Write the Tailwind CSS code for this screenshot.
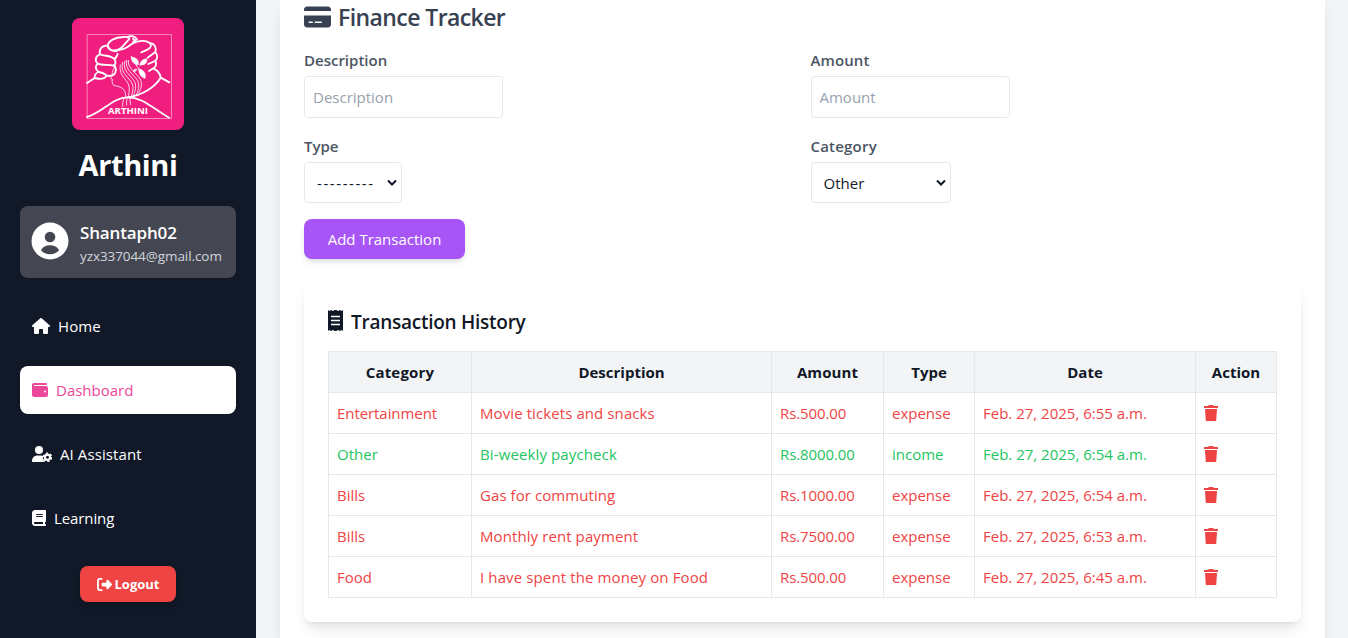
<!DOCTYPE html>
<html lang="en">
<head>
<meta charset="utf-8">
<title>Arthini</title>
<script src="https://cdn.jsdelivr.net/npm/@tailwindcss/browser@4"></script>
</head>
<body class="flex h-[638px] overflow-hidden bg-[#f3f4f6] font-['Open_Sans','Noto_Sans',sans-serif] text-[15px] leading-6 text-[#111827]">
<aside class="flex h-full w-64 shrink-0 flex-col items-center bg-[#111827] px-5 pt-[18px] text-white">
  <svg class="size-28 shrink-0 rounded-lg" viewBox="24 24 336 336" fill="none" stroke="#fff" stroke-linecap="round" stroke-linejoin="round">
    <path fill="#f01f7f" stroke="none" d="M24 24h336v336H24z"/>
    <path stroke="#f986ba" stroke-width="3" d="M70.500 73.500h252v252h-252z"/>
    <g stroke-width="5.500">
      <path d="M69 219l23-15M92 204c-1-9 4-15 12-18M92 204c14 4 29 3 36-7M104 186c-11-8-11-18-3-25 14 6 32 2 47 6 12 5 9 24-2 29-7 3-12 1-17 1-9-8-16-10-24-11M101 161c-10-10-6-24 7-28 16 6 34 3 43 14 6 9 4 16-3 20M108 133c-4-13 4-27 23-27 3 12 12 18 27 18M151 147c6-4 8-8 10-15M131 108c2-16 21-26 47-27 15-1 20 2 17 7-11 10-18 24-31 30-15 7-31 2-33-10zM189 82c10-6 23-5 30 6l-12 8M207 86l9 11M164 120c18-1 27-8 38-17 18-12 42-14 55-4 8 7 3 14-5 19l-20 9M257 99c15 2 21 12 17 27l-23 17M274 126c8 10 7 22-1 27l-20 9M274 153c5 11 1 18-6 22l-13 8M268 175c13 7 21 17 22 28l26 14M290 203c-16 26-52 53-100 59"/>
      <path d="M69 321c48-14 78-59 121-59 45 0 71 29 125 61"/>
    </g>
    <path stroke-width="2.400" d="M155 167c-9 10-10 20-11 28-1 5-5 7-4 10l5 3-1 7c3 2 0 5 2 8 3 6 15 4 24 9 13 6 15 17 15 29M169 165c-5 24 10 36 22 53 8 14 4 29 2 42M176 157c-9 28 14 42 26 59 9 14 4 29 0 44M183 153c-11 28 18 43 29 62 6 13 2 28-4 43M188 151c-8 27 22 43 33 61 6 14 3 28-4 43M193 151c-4 24 27 39 37 59 5 14 2 26-6 38M181 264c-6 10-5 18-5 25M190 264c-3 9-3 14-2 21M197 264c2 8 1 13 3 20"/>
    <path fill="#fff" stroke-width="2" d="M202 141c15 2 23 9 21 23-13-1-21-9-21-23zM228 165c0-11 8-17 20-19 3 13-7 20-20 19zM225 177c14 2 22 14 18 28-11-3-20-14-18-28zM218 178c-9-2-12 4-7 8z"/>
    <path stroke-width="2.500" d="M202 141l26 42"/>
    <text x="132" y="311" fill="#fff" stroke="none" font-size="26" font-weight="700" textLength="120" lengthAdjust="spacingAndGlyphs">ARTHINI</text>
  </svg>
  <h1 class="mb-[23px] mt-[17px] text-[29px] font-bold leading-9 tracking-[-0.4px]">Arthini</h1>
  <div class="flex h-[72px] w-full shrink-0 items-center gap-3 rounded-lg bg-[#444751] px-[11px]">
    <svg class="-mr-px -mt-0.5 size-[38px] shrink-0" viewBox="0 0 38 38"><circle cx="19" cy="19" r="18.500" fill="#fff"/><circle cx="19" cy="15" r="5.300" fill="#444751"/><path fill="#444751" d="M10 28.300c1.500-3.200 5-5 9-5s7.500 1.800 9 5c-2 2.500-5.400 4-9 4s-7-1.500-9-4z"/></svg>
    <div><div class="pt-0.5 text-[17px] font-semibold leading-[26px] tracking-[-0.15px]">Shantaph02</div><div class="text-[13.500px] leading-5 tracking-[-0.08px] text-gray-300">yzx337044@gmail.com</div></div>
  </div>
  <nav class="mt-6 flex w-full flex-col gap-4">
    <a class="flex h-12 items-center gap-2 px-3"><svg class="h-4 w-[18px]" viewBox="0 0 576 512" fill="currentColor"><path d="M575.8 255.500c0 18-15 32.100-32 32.100h-32l.7 160.200c0 2.700-.2 5.400-.5 8.100V472c0 22.100-17.900 40-40 40H392c-22.100 0-40-17.900-40-40V384c0-17.700-14.300-32-32-32H256c-17.700 0-32 14.300-32 32v88c0 22.100-17.900 40-40 40H104c-22.100 0-40-17.900-40-40V287.600H32c-18 0-32-14-32-32.100c0-9 3-17 10-24L266.400 8c7-7 15-8 22-8s15 2 21 7L564.800 231.500c8 7 12 15 11 24z"/></svg><span class="tracking-[0.1px]">Home</span></a>
    <a class="flex h-12 items-center gap-2 rounded-lg bg-white px-3 text-[#ec4899]"><svg class="size-4" viewBox="0 0 512 512" fill="currentColor"><path d="M64 32C28.700 32 0 60.700 0 96V416c0 35.300 28.700 64 64 64H448c35.300 0 64-28.700 64-64V192c0-35.300-28.700-64-64-64H80c-8.800 0-16-7.200-16-16s7.200-16 16-16H448c17.700 0 32-14.300 32-32s-14.300-32-32-32H64zM416 272a32 32 0 1 1 0 64 32 32 0 1 1 0-64z"/></svg><span>Dashboard</span></a>
    <a class="flex h-12 items-center gap-2 px-3"><svg class="h-4 w-5" viewBox="0 0 20 16"><circle cx="7" cy="4" r="4" fill="#fff"/><path fill="#fff" d="M0 15c0-3.300 2.500-5.500 5.600-5.500h3c1.100 0 1.700.2 2.500.5-.5 2.500.2 4.500 1.900 6H1c-.6 0-1-.4-1-1z"/><circle cx="15.500" cy="11.300" r="2.600" fill="none" stroke="#fff" stroke-width="2.200"/><circle cx="15.500" cy="11.300" r="4.200" fill="none" stroke="#fff" stroke-width="1.300" stroke-dasharray="2.200"/></svg><span class="tracking-[0.1px]">AI Assistant</span></a>
    <a class="flex h-12 items-center gap-2 px-3"><svg class="h-4 w-3.5" viewBox="0 0 448 512" fill="currentColor"><path fill-rule="evenodd" d="M96 0C43 0 0 43 0 96V416c0 53 43 96 96 96H416c17.700 0 32-14.300 32-32s-14.300-32-32-32V384c17.700 0 32-14.300 32-32V32c0-17.700-14.300-32-32-32H96zm0 384H352v64H96c-17.700 0-32-14.300-32-32s14.300-32 32-32zm32-240c0-8.800 7.200-16 16-16H336c8.800 0 16 7.200 16 16s-7.200 16-16 16H144c-8.800 0-16-7.200-16-16zm16 48H336c8.800 0 16 7.200 16 16s-7.200 16-16 16H144c-8.800 0-16-7.200-16-16s7.200-16 16-16z"/></svg><span class="tracking-[-0.1px]">Learning</span></a>
  </nav>
  <button class="mt-6 flex h-9 w-24 shrink-0 items-center justify-center gap-[3px] rounded-lg bg-[#ef4444] text-[13px] font-bold shadow-md"><svg class="size-[15px]" viewBox="0 0 512 512" fill="currentColor"><path d="M377.900 105.900L500.700 228.700c7.200 7.200 11.300 17.100 11.300 27.300s-4.100 20.100-11.300 27.300L377.900 406.100c-6.400 6.400-15 9.900-24 9.900c-18.700 0-33.900-15.200-33.900-33.900l0-62.100-128 0c-17.700 0-32-14.300-32-32l0-64c0-17.700 14.300-32 32-32l128 0 0-62.100c0-18.700 15.200-33.900 33.900-33.900c9 0 17.600 3.600 24 9.900zM160 96L96 96c-17.700 0-32 14.300-32 32l0 256c0 17.700 14.300 32 32 32l64 0c17.700 0 32 14.300 32 32s-14.300 32-32 32l-64 0c-53 0-96-43-96-96L0 128C0 75 43 32 96 32l64 0c17.700 0 32 14.300 32 32s-14.300 32-32 32z"/></svg><span>Logout</span></button>
</aside>
<main class="h-full flex-1 pl-6 pr-[23px]">
<section class="h-full bg-white px-6 shadow-lg">
  <h2 class="mb-4 flex h-8 items-center gap-[7px] text-[23px] font-semibold text-[#374151]"><svg class="mt-0.5 h-6 w-[27px]" viewBox="0 0 576 512" fill="currentColor"><path d="M64 32C28.700 32 0 60.700 0 96v32H576V96c0-35.300-28.700-64-64-64H64zM576 224H0V416c0 35.300 28.700 64 64 64H512c35.300 0 64-28.700 64-64V224zM112 352h64c8.800 0 16 7.200 16 16s-7.200 16-16 16H112c-8.800 0-16-7.200-16-16s7.200-16 16-16zm112 16c0-8.800 7.200-16 16-16H368c8.800 0 16 7.200 16 16s-7.200 16-16 16H240c-8.800 0-16-7.200-16-16z"/></svg><span class="pt-px tracking-[-0.58px]">Finance Tracker</span></h2>
  <form>
    <div class="grid grid-cols-2 gap-4">
      <div><label class="mb-1 block font-semibold text-[#4b5563]">Description</label><input class="block h-[42px] w-[199px] rounded border border-gray-200 px-2 placeholder:text-gray-400" placeholder="Description"></div>
      <div><label class="mb-1 block font-semibold tracking-[0.1px] text-[#4b5563]">Amount</label><input class="block h-[42px] w-[199px] rounded border border-gray-200 px-2 placeholder:text-gray-400" placeholder="Amount"></div>
      <div><label class="mb-1 block font-semibold text-[#4b5563]">Type</label><div class="flex h-[41px] w-[98px] items-center justify-between rounded border border-gray-200 pl-3 pr-1"><span class="tracking-[1.580px]">---------</span><svg class="h-2 w-2.5 shrink-0" viewBox="0 0 10 8"><path d="M1 1.500l4 4 4-4" fill="none" stroke="#111827" stroke-width="2"/></svg></div></div>
      <div><label class="mb-1 block font-semibold tracking-[0.2px] text-[#4b5563]">Category</label><div class="flex h-[41px] w-[140px] items-center justify-between rounded border border-gray-200 pl-3 pr-1"><span>Other</span><svg class="h-2 w-2.5 shrink-0" viewBox="0 0 10 8"><path d="M1 1.500l4 4 4-4" fill="none" stroke="#111827" stroke-width="2"/></svg></div></div>
    </div>
    <button type="button" class="mt-4 block h-10 w-[161px] rounded-lg bg-[#a855f7] text-white shadow-md">Add Transaction</button>
  </form>
  <div class="mt-6 rounded-lg bg-white p-6 shadow-lg">
    <h3 class="mb-4 flex h-7 items-center gap-2 text-[19px] font-medium"><svg class="-mt-0.5 h-[21px] w-[15px]" viewBox="0 0 15 21"><path fill="#111827" d="M0 0l1.300 1 1.800-1 1.800 1 1.800-1h1.600l1.800 1 1.800-1 1.800 1L15 0v21l-1.300-1-1.800 1-1.800-1-1.800 1H6.700l-1.800-1-1.800 1-1.800-1L0 21z"/><path stroke="#fff" stroke-width="1.300" d="M3 6.500h9M3 10.500h9M3 14.500h9"/></svg><span class="pt-0.5 font-[550] tracking-[-0.26px]">Transaction History</span></h3>
    <table class="w-[949px] table-fixed border-collapse [&_td]:border [&_td]:border-gray-200 [&_td]:px-2 [&_td]:py-0 [&_th]:border [&_th]:border-gray-200 [&_th]:font-bold [&_tr]:h-[41px]">
      <colgroup><col class="w-[143px]"><col class="w-[300px]"><col class="w-[112px]"><col class="w-[91px]"><col class="w-[221px]"><col class="w-[81px]"></colgroup>
      <thead class="bg-[#f3f4f6]"><tr><th class="tracking-[0.2px]">Category</th><th>Description</th><th class="tracking-[0.1px]">Amount</th><th>Type</th><th>Date</th><th>Action</th></tr></thead>
      <tbody class="text-[#ef4444]">
        <tr><td class="tracking-[-0.07px]">Entertainment</td><td class="tracking-[0.09px]">Movie tickets and snacks</td><td class="tracking-[-0.1px]">Rs.500.00</td><td>expense</td><td>Feb. 27, 2025, 6:55 a.m.</td><td><svg class="h-4 w-3.5" viewBox="0 0 14 16" fill="#ef4444"><path d="M4.500 0h5v1H14v2H0V1h4.500zM1 4h12l-.8 12H1.800z"/></svg></td></tr>
        <tr class="text-[#22c55e]"><td>Other</td><td class="tracking-[0.12px]">Bi-weekly paycheck</td><td class="tracking-[-0.1px]">Rs.8000.00</td><td>income</td><td>Feb. 27, 2025, 6:54 a.m.</td><td><svg class="h-4 w-3.5" viewBox="0 0 14 16" fill="#ef4444"><path d="M4.500 0h5v1H14v2H0V1h4.500zM1 4h12l-.8 12H1.800z"/></svg></td></tr>
        <tr><td>Bills</td><td class="tracking-[0.07px]">Gas for commuting</td><td class="tracking-[-0.1px]">Rs.1000.00</td><td>expense</td><td>Feb. 27, 2025, 6:54 a.m.</td><td><svg class="h-4 w-3.5" viewBox="0 0 14 16" fill="#ef4444"><path d="M4.500 0h5v1H14v2H0V1h4.500zM1 4h12l-.8 12H1.800z"/></svg></td></tr>
        <tr><td>Bills</td><td class="tracking-[0.09px]">Monthly rent payment</td><td class="tracking-[-0.1px]">Rs.7500.00</td><td>expense</td><td>Feb. 27, 2025, 6:53 a.m.</td><td><svg class="h-4 w-3.5" viewBox="0 0 14 16" fill="#ef4444"><path d="M4.500 0h5v1H14v2H0V1h4.500zM1 4h12l-.8 12H1.800z"/></svg></td></tr>
        <tr><td>Food</td><td class="tracking-[0.12px]">I have spent the money on Food</td><td class="tracking-[-0.1px]">Rs.500.00</td><td>expense</td><td>Feb. 27, 2025, 6:45 a.m.</td><td><svg class="h-4 w-3.5" viewBox="0 0 14 16" fill="#ef4444"><path d="M4.500 0h5v1H14v2H0V1h4.500zM1 4h12l-.8 12H1.800z"/></svg></td></tr>
      </tbody>
    </table>
  </div>
</section>
</main>
</body>
</html>
